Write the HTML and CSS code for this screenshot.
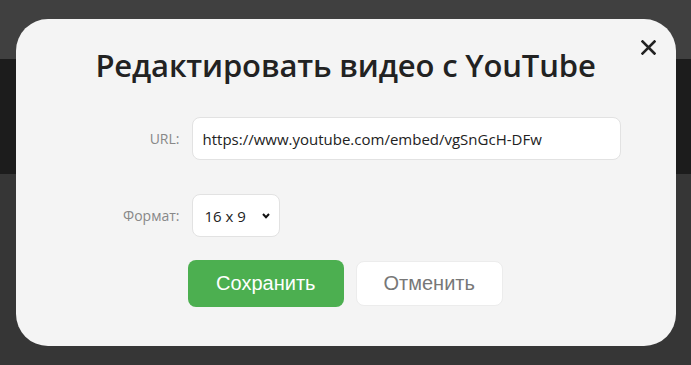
FILE: index.html
```html
<!DOCTYPE html>
<html lang="ru">
<head>
    <meta charset="UTF-8">
    <meta name="viewport" content="width=device-width, initial-scale=1.0">
    <title>Редактировать видео</title>
    <link rel="stylesheet" href="styles.css">
</head>
<body>
    <div class="page">
        <div class="topbar"></div>
        <div class="band"></div>
    </div>

    <div class="overlay">
        <div class="modal">
            <button class="close" type="button" aria-label="Закрыть">
                <svg width="15" height="15" viewBox="0 0 15 15">
                    <path d="M1.5 1.5 L13.5 13.5 M13.5 1.5 L1.5 13.5" stroke="#222" stroke-width="2.6" stroke-linecap="square" fill="none"/>
                </svg>
            </button>
            <h2>Редактировать видео с YouTube</h2>
            <form class="form">
                <div class="form-row">
                    <label for="videoUrl">URL:</label>
                    <input type="text" id="videoUrl" value="https://www.youtube.com/embed/vgSnGcH-DFw">
                </div>
                <div class="form-row">
                    <label for="videoFormat">Формат:</label>
                    <div class="select-wrap">
                        <select id="videoFormat">
                            <option>16 x 9</option>
                            <option>4 x 3</option>
                        </select>
                        <svg class="chevron" width="8" height="6" viewBox="0 0 8 6">
                            <path d="M1 1 L4 4.2 L7 1" stroke="#111" stroke-width="2" fill="none"/>
                        </svg>
                    </div>
                </div>
                <div class="actions">
                    <button type="submit" class="btn btn-save">Сохранить</button>
                    <button type="button" class="btn btn-cancel">Отменить</button>
                </div>
            </form>
        </div>
    </div>
</body>
</html>
```

FILE: styles.css
```css
body {
    margin: 0;
    padding: 0;
    background-color: #363636;
    font-family: "Open Sans", Arial, sans-serif;
}

.topbar {
    height: 59px;
    background-color: #404040;
}

.band {
    height: 115px;
    background-color: #1c1c1c;
}

.overlay {
    position: fixed;
    top: 0;
    left: 0;
    right: 0;
    bottom: 0;
    display: flex;
    align-items: center;
    justify-content: center;
}

.modal {
    position: relative;
    width: 660px;
    height: 327px;
    box-sizing: border-box;
    padding: 28px 55px 0;
    background-color: #f4f4f4;
    border-radius: 32px;
}

.close {
    position: absolute;
    top: 21px;
    right: 20px;
    padding: 0;
    border: none;
    background: none;
    cursor: pointer;
    line-height: 0;
}

.modal h2 {
    margin: 0 0 34px;
    font-size: 31px;
    font-weight: 600;
    letter-spacing: -0.15px;
    line-height: 36px;
    color: #222;
    text-align: center;
}

.form-row {
    display: flex;
    align-items: center;
    margin-bottom: 34px;
}

.form-row label {
    width: 109px;
    margin-right: 12px;
    text-align: right;
    font-size: 14px;
    color: #888;
}

.form-row input {
    width: 429px;
    height: 43px;
    box-sizing: border-box;
    padding: 0 10px;
    border: 1px solid #e2e2e2;
    border-radius: 8px;
    background-color: #fff;
    font-family: "Open Sans", Arial, sans-serif;
    font-size: 15px;
    color: #222;
    outline: none;
}

.select-wrap {
    position: relative;
}

.select-wrap select {
    appearance: none;
    -webkit-appearance: none;
    width: 88px;
    height: 43px;
    box-sizing: border-box;
    padding: 0 0 0 12px;
    border: 1px solid #e2e2e2;
    border-radius: 8px;
    background-color: #fff;
    font-family: "Open Sans", Arial, sans-serif;
    font-size: 15px;
    color: #222;
    outline: none;
}

.chevron {
    position: absolute;
    top: 19px;
    left: 70px;
    pointer-events: none;
}

.actions {
    display: flex;
    justify-content: center;
    align-items: center;
    gap: 12px;
    margin-top: -11px;
}

.btn {
    font-family: "Liberation Sans", Arial, sans-serif;
    font-size: 20px;
    border-radius: 8px;
    cursor: pointer;
}

.btn-save {
    height: 47px;
    padding: 0 28px;
    background-color: #4caf50;
    color: #fff;
    border: none;
}

.btn-cancel {
    height: 45px;
    padding: 0 27px;
    background-color: #fff;
    color: #777;
    border: 1px solid #ececec;
}
```
